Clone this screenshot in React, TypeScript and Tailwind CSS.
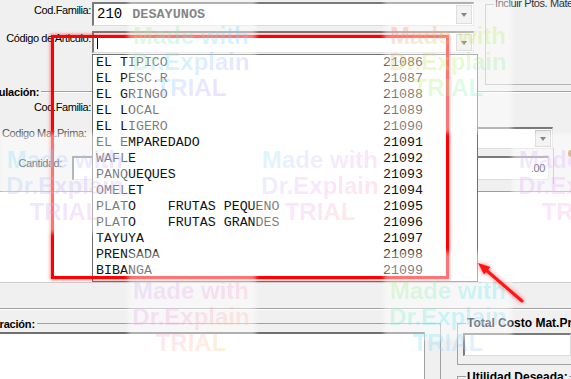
import React from "react";

const items: [string, string][] = [
  ["EL TIPICO", "21086"],
  ["EL PESC.R", "21087"],
  ["EL GRINGO", "21088"],
  ["EL LOCAL", "21089"],
  ["EL LIGERO", "21090"],
  ["EL EMPAREDADO", "21091"],
  ["WAFLE", "21092"],
  ["PANQUEQUES", "21093"],
  ["OMELET", "21094"],
  ["PLATO    FRUTAS PEQUENO", "21095"],
  ["PLATO    FRUTAS GRANDES", "21096"],
  ["TAYUYA", "21097"],
  ["PRENSADA", "21098"],
  ["BIBANGA", "21099"],
];

// classic sunken edit box
const sunken =
  "bg-white border-t-2 border-l-2 border-b border-r border-t-[#7a7a7a] border-l-[#7a7a7a] border-b-[#dcdcdc] border-r-[#dcdcdc]";

function DropBtn() {
  return (
    <div className="ml-auto mr-[1px] my-[1px] w-[16px] self-stretch bg-[#e9e9e9] border border-[#c4c4c4] flex items-center justify-center">
      <div className="w-0 h-0 border-l-[3.5px] border-r-[3.5px] border-t-[4px] border-l-transparent border-r-transparent border-t-[#222]" />
    </div>
  );
}

function Mark({ pos, grad }: { pos: string; grad: string }) {
  return (
    <div
      className={`absolute ${pos} w-[130px] text-center font-bold text-[24px] leading-[26px] tracking-normal whitespace-nowrap bg-clip-text text-transparent bg-linear-to-br ${grad} opacity-30 blur-[0.3px]`}
    >
      <div>Made with</div>
      <div>Dr.Explain</div>
      <div>TRIAL</div>
    </div>
  );
}

export default function App() {
  return (
    <div className="relative w-[571px] h-[379px] overflow-hidden bg-[#f0f0f0] font-['Liberation_Sans',Arial,sans-serif] text-[11px] leading-[13px] tracking-[-0.4px] text-black">
      {/* top: familia / articulo */}
      <div className="flex h-[85px]">
        <div className="w-[477px] pt-[2px]">
          <div className="flex h-[24px]">
            <span className="w-[92px] pt-[2px] pr-[1px] text-right">Cod.Familia:</span>
            <div className={`w-[382px] flex items-center ${sunken}`}>
              <span className="pl-[3px] font-['Liberation_Mono',monospace] text-[14px] tracking-normal">210</span>
              <span className="ml-[10px] font-['Liberation_Mono',monospace] text-[13.5px] font-bold tracking-normal text-[#222]">
                DESAYUNOS
              </span>
              <DropBtn />
            </div>
          </div>
          <div className="flex h-[22px] mt-[5px]">
            <span className="w-[92px] pt-[1px] pr-[1px] text-right">Código de Articulo:</span>
            <div className={`w-[382px] flex items-center ${sunken}`}>
              <div className="ml-[3px] w-px h-[13px] bg-black" />
              <DropBtn />
            </div>
          </div>
        </div>
        <div className="relative ml-[8px] mt-[4px] h-[81px] flex-1 border border-r-0 border-[#b4b4b4]">
          <span className="absolute left-[8px] top-[-8px] bg-[#f0f0f0] px-[1px] whitespace-nowrap text-[#333]">
            Incluir Ptos. Materia Prima
          </span>
        </div>
      </div>

      {/* formulacion */}
      <div className="h-[107px] border-b border-[#9c9c9c]">
        <div className="flex items-center h-[14px]">
          <span className="ml-[-28px] font-bold tracking-[-0.2px] whitespace-nowrap">Formulación:</span>
          <div className="ml-[2px] flex-1 border-t border-b border-t-[#a0a0a0] border-b-white" />
        </div>
        <div className="flex h-[22px] mt-[1px]">
          <span className="w-[92px] pt-[1px] pr-[1px] text-right">Cod.Familia:</span>
          <div className={`w-[370px] ${sunken}`} />
        </div>
        <div className="flex h-[22px] mt-[5px]">
          <span className="w-[92px] pl-[2px] whitespace-nowrap text-[#444]">Codigo Mat.Prima:</span>
          <div className={`w-[461px] flex ${sunken}`}>
            <DropBtn />
          </div>
        </div>
        <div className="flex h-[24px] mt-[7px]">
          <span className="w-[72px] pt-[1px] pr-[10px] text-right">Cantidad:</span>
          <div className={`w-[477px] flex items-center justify-end pr-[3px] ${sunken}`}>.00</div>
          <div className="ml-[4px] -mt-[8px] h-[36px] flex-1 border-l border-[#b0b0b0] flex justify-end">
            <div className="w-[3px] h-[7px] mt-[2px] rounded-l-full bg-[#c8803a]" />
          </div>
        </div>
      </div>

      <div className="h-[91px] bg-white border-b border-[#d0d0d0]" />
      <div className="h-[26px] border-b border-[#a0a0a0]" />

      {/* preparacion + totales */}
      <div className="flex h-[70px] border-t border-white">
        <div className="relative w-[441px] mt-[13px] border-t border-r border-[#a0a0a0] pt-[8px]">
          <span className="absolute left-[-30px] top-[-6px] bg-[#f0f0f0] pr-[2px] font-bold tracking-[-0.2px] whitespace-nowrap">
            Preparación:
          </span>
          <div className="w-[425px] h-full bg-white border-t-2 border-r border-t-[#707070] border-r-[#a0a0a0]" />
        </div>
        <div className="ml-[16px] mt-[13px] flex-1">
          <div className="relative h-[42px] border-t border-l border-b border-[#a0a0a0] pl-[5px] pt-[9px]">
            <span className="absolute left-[8px] top-[-7px] bg-[#f0f0f0] px-[1px] font-bold text-[12px] tracking-normal whitespace-nowrap">
              Total Costo Mat.Prima
            </span>
            <div className={`h-[23px] ${sunken}`} />
          </div>
          <div className="relative mt-[11px] h-[20px] border-t border-l border-[#a0a0a0]">
            <span className="absolute left-[8px] top-[-6px] bg-[#f0f0f0] px-[1px] font-bold text-[12px] tracking-normal whitespace-nowrap">
              Utilidad Deseada:
            </span>
          </div>
        </div>
      </div>

      {/* open dropdown list */}
      <div className="absolute left-[92px] top-[54px] w-[386px] h-[228px] bg-white border border-[#6f6f6f] font-['Liberation_Mono',monospace] text-[13.3px] leading-[16px] tracking-normal text-[#111]">
        {items.map(([name, code]) => (
          <div key={code} className="flex h-[16px] items-center pl-[3px] pr-[54px]">
            <span className="flex-1 whitespace-pre">{name}</span>
            <span>{code}</span>
          </div>
        ))}
      </div>

      {/* annotation */}
      <div className="absolute left-[51px] top-[35px] w-[398px] h-[244px] border-[3px] border-[#ff0000] shadow-[0_0_3px_1px_rgba(255,0,0,0.45)]" />

      {/* watermark fade boxes */}
      <div className="absolute left-[128px] top-0 w-[128px] h-[133px] bg-white/45 blur-[2px]" />
      <div className="absolute left-[384px] top-0 w-[128px] h-[133px] bg-white/45 blur-[2px]" />
      <div className="absolute left-0 top-[133px] w-[128px] h-[100px] bg-white/45 blur-[2px]" />
      <div className="absolute left-[256px] top-[133px] w-[128px] h-[100px] bg-white/45 blur-[2px]" />
      <div className="absolute left-[512px] top-[133px] w-[128px] h-[100px] bg-white/45 blur-[2px]" />
      <div className="absolute left-[128px] top-[252px] w-[128px] h-[88px] bg-white/45 blur-[2px]" />
      <div className="absolute left-[384px] top-[252px] w-[128px] h-[88px] bg-white/45 blur-[2px]" />

      <Mark pos="left-[126px] top-[23px]" grad="from-lime-300 via-sky-300 to-fuchsia-400" />
      <Mark pos="left-[383px] top-[23px]" grad="from-rose-400 via-lime-300 to-cyan-300" />
      <Mark pos="left-0 top-[147px]" grad="from-cyan-300 via-violet-300 to-pink-300" />
      <Mark pos="left-[255px] top-[147px]" grad="from-cyan-300 via-fuchsia-300 to-orange-300" />
      <Mark pos="left-[512px] top-[147px]" grad="from-violet-300 via-fuchsia-300 to-orange-300" />
      <Mark pos="left-[126px] top-[278px]" grad="from-violet-300 via-pink-300 to-yellow-300" />
      <Mark pos="left-[383px] top-[278px]" grad="from-lime-300 via-cyan-300 to-violet-300" />

      <svg
        className="absolute left-[470px] top-[255px] drop-shadow-[0_0_2px_rgba(255,0,0,0.6)]"
        width="60"
        height="55"
        viewBox="0 0 60 55"
      >
        <line x1="52" y1="46" x2="16" y2="15" stroke="#ff1515" strokeWidth="3" strokeLinecap="round" />
        <polygon points="8,8 20.4,11.9 14,19.5" fill="#ff1515" />
      </svg>
    </div>
  );
}
